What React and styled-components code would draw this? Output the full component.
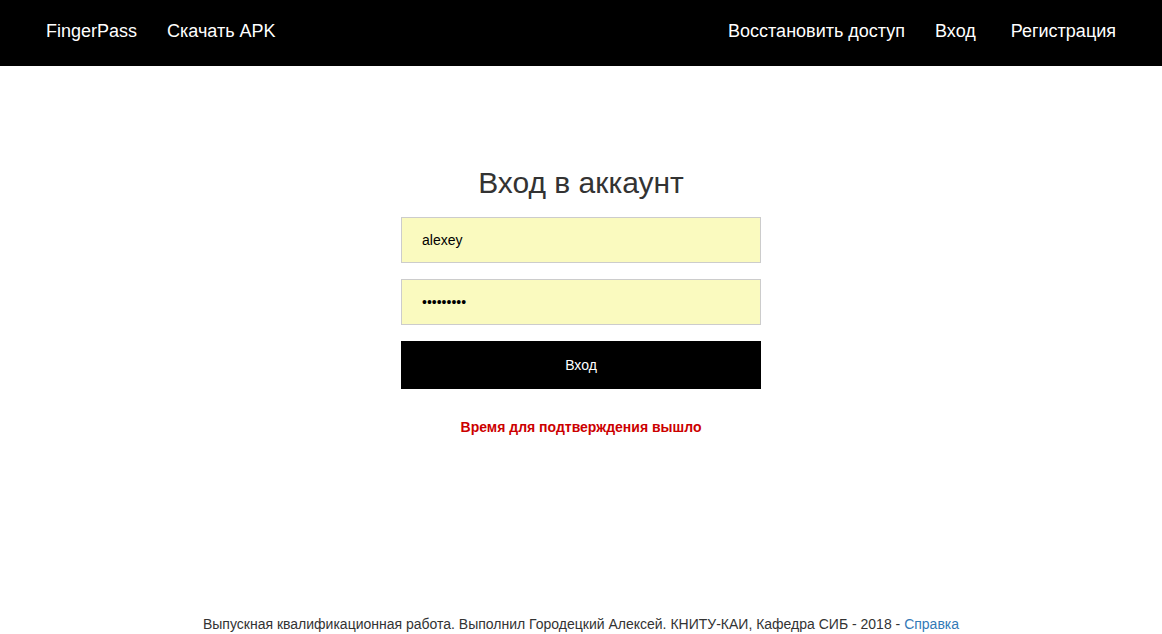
import React from "react";
import styled, { createGlobalStyle } from "styled-components";

const Global = createGlobalStyle`
  html, body { margin: 0; padding: 0; }
  body {
    font-family: "Liberation Sans", Arial, sans-serif;
    font-size: 14px;
    line-height: 1.42857;
    color: #333;
    background: #fff;
  }
  * { box-sizing: border-box; }
`;

const Page = styled.div`
  min-height: 634px;
  display: flex;
  flex-direction: column;
`;

const Navbar = styled.nav`
  height: 66px;
  background: #000;
  display: flex;
  align-items: center;
  justify-content: space-between;
  padding: 0 31px 4px;
`;

const NavGroup = styled.div`
  display: flex;
  align-items: center;
`;

const NavLink = styled.a`
  color: #fff;
  font-size: 18px;
  text-decoration: none;
  padding: 0 15px 0 ${(p) => p.$padLeft || 15}px;
  line-height: 20px;
  cursor: pointer;
`;

const Main = styled.main`
  flex: 1;
  display: flex;
  flex-direction: column;
  align-items: center;
  padding-top: 100px;
`;

const Title = styled.h2`
  margin: 0 0 18px;
  font-size: 30px;
  font-weight: 500;
  line-height: 33px;
  color: #333;
`;

const Form = styled.form`
  width: 360px;
  display: flex;
  flex-direction: column;
  gap: 16px;
`;

const Input = styled.input`
  width: 100%;
  height: 46px;
  padding: 0 20px;
  border: 1px solid #ccc;
  background: #fafabf;
  font-family: "Liberation Sans", Arial, sans-serif;
  font-size: 14px;
  color: #000;
  outline: none;
`;

const Button = styled.button`
  width: 100%;
  height: 48px;
  background: #000;
  color: #fff;
  border: none;
  font-family: "Liberation Sans", Arial, sans-serif;
  font-size: 14px;
  cursor: pointer;
`;

const ErrorText = styled.p`
  margin: 28px 0 0;
  color: #c00;
  font-weight: bold;
  font-size: 14px;
  line-height: 20px;
`;

const Footer = styled.footer`
  text-align: center;
  font-size: 14px;
  line-height: 20px;
  color: #333;
`;

const FooterLink = styled.a`
  color: #337ab7;
  text-decoration: none;
`;

export default function App() {
  return (
    <Page>
      <Global />
      <Navbar>
        <NavGroup>
          <NavLink>FingerPass</NavLink>
          <NavLink>Скачать APK</NavLink>
        </NavGroup>
        <NavGroup>
          <NavLink>Восстановить доступ</NavLink>
          <NavLink>Вход</NavLink>
          <NavLink $padLeft={20}>Регистрация</NavLink>
        </NavGroup>
      </Navbar>
      <Main>
        <Title>Вход в аккаунт</Title>
        <Form onSubmit={(e) => e.preventDefault()}>
          <Input type="text" defaultValue="alexey" />
          <Input type="password" defaultValue="123456789" />
          <Button type="submit">Вход</Button>
        </Form>
        <ErrorText>Время для подтверждения вышло</ErrorText>
      </Main>
      <Footer>
        Выпускная квалификационная работа. Выполнил Городецкий Алексей. КНИТУ-КАИ, Кафедра СИБ - 2018 -{" "}
        <FooterLink>Справка</FooterLink>
      </Footer>
    </Page>
  );
}
